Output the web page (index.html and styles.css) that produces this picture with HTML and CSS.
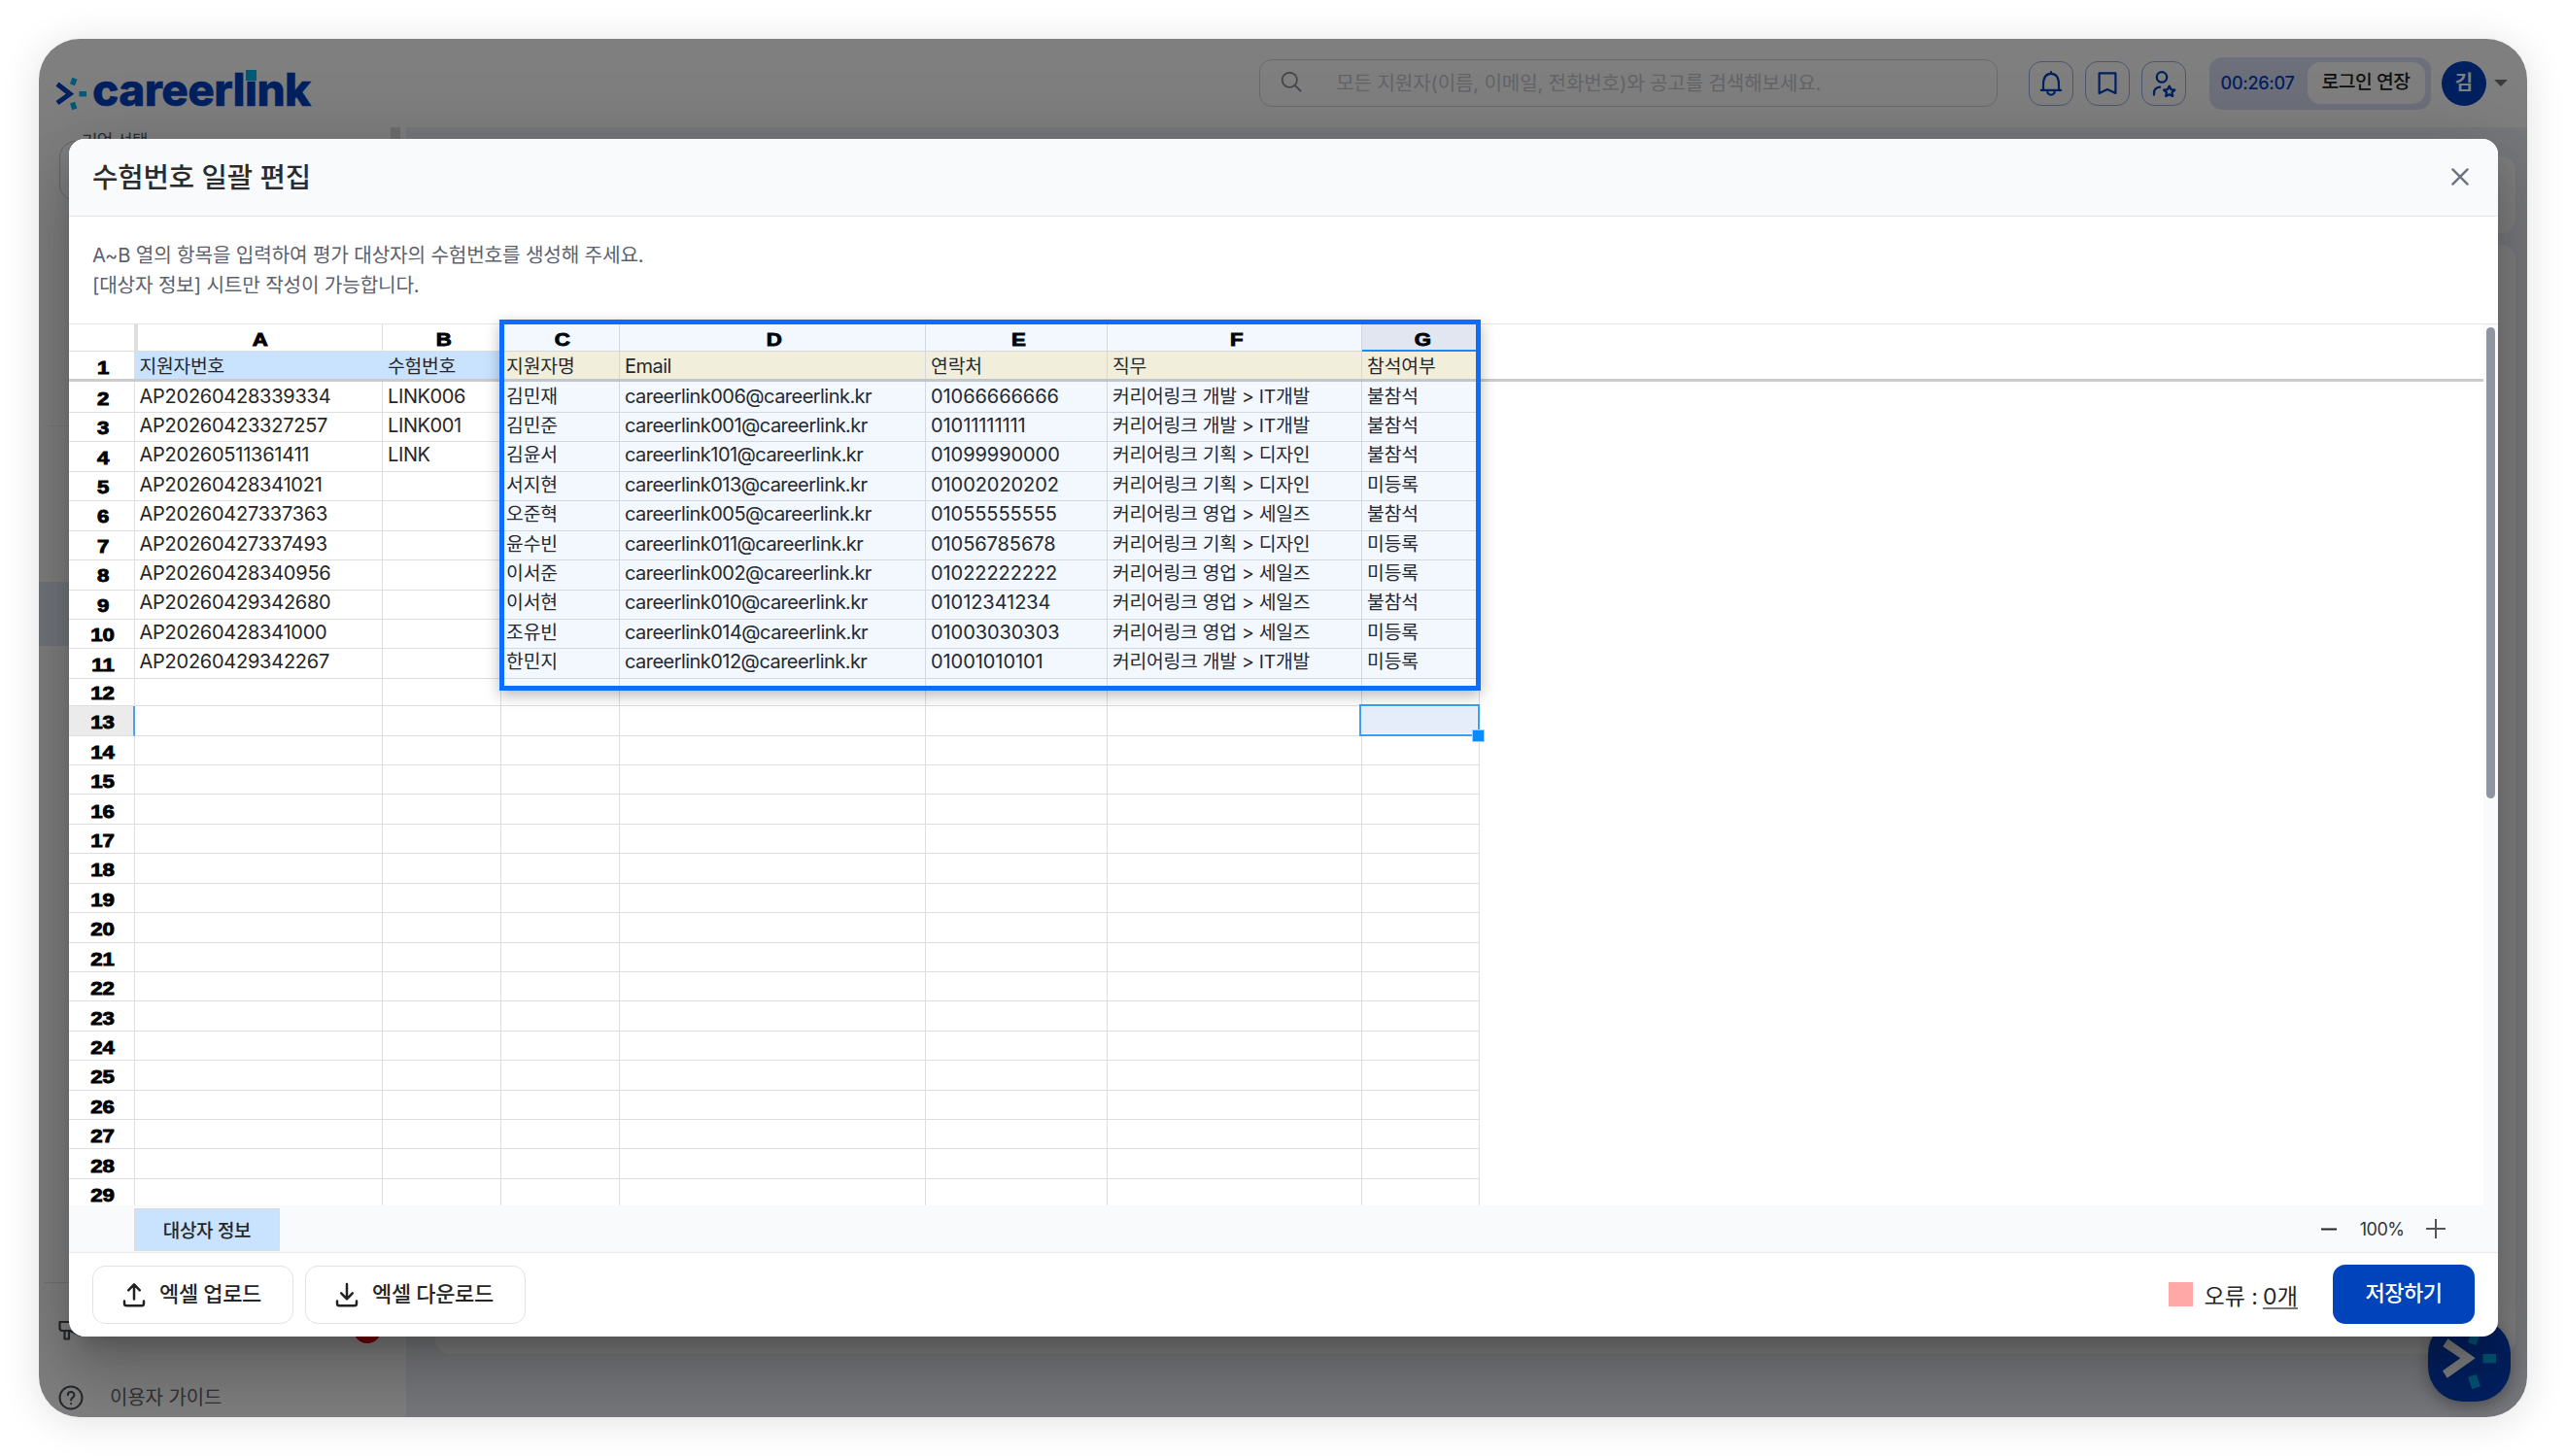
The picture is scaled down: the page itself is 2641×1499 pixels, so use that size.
FILE: index.html
```html
<!DOCTYPE html>
<html lang="ko">
<head>
<meta charset="utf-8">
<title>careerlink</title>
<link rel="stylesheet" href="styles.css">
</head>
<body>
<div class="window">
  <div class="app">
    <header class="topbar">
      <div class="logo">
        <svg class="logo-mark" width="33" height="36" viewBox="0 0 33 36"><path d="M2 8.5 L15 18.7 L2 28" fill="none" stroke="#0040c0" stroke-width="5"/><g fill="#00b4ee"><rect x="16" y="2.5" width="5.4" height="7" transform="rotate(22 18.7 6)"/><rect x="24.5" y="16" width="7.5" height="5.4"/><rect x="16" y="27.5" width="5.4" height="7" transform="rotate(-18 18.7 31)"/></g></svg>
        <span class="logo-text">careerl<span class="logo-i">i</span>nk</span>
      </div>
      <div class="search">
        <svg width="23" height="23" viewBox="0 0 23 23" fill="none" stroke="#8b8f9a" stroke-width="1.9"><circle cx="9.3" cy="9.3" r="7.6"/><path d="M14.8 14.8 L21 21"/></svg>
        <span class="search-hint">모든 지원자(이름, 이메일, 전화번호)와 공고를 검색해보세요.</span>
      </div>
      <div class="tools">
        <div class="tool"><svg width="26" height="28" viewBox="0 0 26 28" fill="none" stroke="#0040c0" stroke-width="2.2" stroke-linejoin="round" stroke-linecap="round"><path d="M13 2.2 V3.6 M2.8 20.8 H23.2 M5 20.6 V15.2 C5 8 8 3.8 13 3.8 C18 3.8 21 8 21 15.2 V20.6 M9.2 21.2 C9.2 27.2 16.8 27.2 16.8 21.2"/></svg></div>
        <div class="tool"><svg width="22" height="26" viewBox="0 0 22 26" fill="none" stroke="#0040c0" stroke-width="2.2" stroke-linejoin="round"><path d="M2.6 2.4 H19.4 V23 L11 19 L2.6 23 Z"/></svg></div>
        <div class="tool"><svg width="26" height="28" viewBox="0 0 26 28" fill="none" stroke="#0040c0" stroke-width="2.3" stroke-linejoin="round" stroke-linecap="round"><circle cx="11" cy="7.4" r="5.2"/><path d="M3 25.6 V23.6 Q3 18.4 9.2 17.6"/><path d="M18.7 16.6 L20.4 20.1 L24.3 20.6 L21.5 23.2 L22.2 27 L18.7 25.2 L15.2 27 L15.9 23.2 L13.1 20.6 L17 20.1 Z"/></svg></div>
      </div>
      <div class="session"><span class="timer">00:26:07</span><span class="extend">로그인 연장</span></div>
      <div class="avatar">김</div>
      <div class="caret"></div>
    </header>
    <div class="below">
      <aside class="sidebar">
        <div class="company"><span class="company-label">기업 선택</span></div>
        <div class="rule rule-top"></div>
        <div class="menu-active"></div>
        <div class="rule rule-bottom"></div>
        <div class="notice">
          <svg width="26" height="26" viewBox="0 0 26 26" fill="none" stroke="#4b5059" stroke-width="2.2" stroke-linejoin="round"><path d="M1.5 4 H12 L23 1 V18 L12 13 H4 Q1.5 13 1.5 10 Z M6.5 13 V21.5 H11 V13"/></svg>
          <span class="badge"></span>
        </div>
        <div class="guide">
          <svg width="26" height="26" viewBox="0 0 26 26" fill="none" stroke="#4b5059" stroke-width="2" stroke-linecap="round"><circle cx="13" cy="13" r="11.5"/><path d="M9.8 10.3 C9.8 5.9 16.4 5.9 16.4 10.2 C16.4 13 13.1 12.8 13.1 15.6 M13.1 19 V19.2"/></svg>
          <span>이용자 가이드</span>
        </div>
      </aside>
      <div class="gutter"></div>
      <main class="content"><div class="card card-top"></div><div class="card card-main"></div></main>
    </div>
    <div class="chat"><svg width="85" height="85" viewBox="0 0 85 85"><path fill="#fff" d="M20.5 20.3 L48.7 40.3 L19.7 60.7 L15 53.3 L33.3 40.3 L15.3 28.2 Z"/><g fill="#00a8e8"><rect x="43" y="13" width="9" height="13" transform="rotate(22 47.5 19.5)"/><rect x="56.5" y="36" width="13.5" height="9.3"/><rect x="43" y="58" width="9" height="13" transform="rotate(-18 47.5 64.5)"/></g></svg></div>
  </div>
  <div class="backdrop">
    <section class="modal">
      <header class="modal-head"><h1>수험번호 일괄 편집</h1>
        <svg width="20" height="20" viewBox="0 0 20 20" fill="none" stroke="#6b7280" stroke-width="2.4" stroke-linecap="round"><path d="M2.4 2.4 L17.6 17.6 M17.6 2.4 L2.4 17.6"/></svg></header>
      <div class="intro">A~B 열의 항목을 입력하여 평가 대상자의 수험번호를 생성해 주세요.<br>[대상자 정보] 시트만 작성이 가능합니다.</div>
      <div class="sheet">
        <div class="grid">
          <div class="row letters"><b></b><b class="first"><span>A</span></b><b><span>B</span></b><b><span>C</span></b><b><span>D</span></b><b><span>E</span></b><b><span>F</span></b><b class="active"><span>G</span></b></div>
          <div class="frozen"><div class="row titles"><b><span>1</span></b><i>지원자번호</i><i>수험번호</i><i>지원자명</i><i>Email</i><i>연락처</i><i>직무</i><i>참석여부</i></div></div>
          <div class="row"><b><span>2</span></b><i>AP20260428339334</i><i>LINK006</i><i>김민재</i><i>careerlink006@careerlink.kr</i><i>01066666666</i><i>커리어링크 개발 &gt; IT개발</i><i>불참석</i></div>
          <div class="row"><b><span>3</span></b><i>AP20260423327257</i><i>LINK001</i><i>김민준</i><i>careerlink001@careerlink.kr</i><i>01011111111</i><i>커리어링크 개발 &gt; IT개발</i><i>불참석</i></div>
          <div class="row"><b><span>4</span></b><i>AP20260511361411</i><i>LINK</i><i>김윤서</i><i>careerlink101@careerlink.kr</i><i>01099990000</i><i>커리어링크 기획 &gt; 디자인</i><i>불참석</i></div>
          <div class="row"><b><span>5</span></b><i>AP20260428341021</i><i></i><i>서지현</i><i>careerlink013@careerlink.kr</i><i>01002020202</i><i>커리어링크 기획 &gt; 디자인</i><i>미등록</i></div>
          <div class="row"><b><span>6</span></b><i>AP20260427337363</i><i></i><i>오준혁</i><i>careerlink005@careerlink.kr</i><i>01055555555</i><i>커리어링크 영업 &gt; 세일즈</i><i>불참석</i></div>
          <div class="row"><b><span>7</span></b><i>AP20260427337493</i><i></i><i>윤수빈</i><i>careerlink011@careerlink.kr</i><i>01056785678</i><i>커리어링크 기획 &gt; 디자인</i><i>미등록</i></div>
          <div class="row"><b><span>8</span></b><i>AP20260428340956</i><i></i><i>이서준</i><i>careerlink002@careerlink.kr</i><i>01022222222</i><i>커리어링크 영업 &gt; 세일즈</i><i>미등록</i></div>
          <div class="row"><b><span>9</span></b><i>AP20260429342680</i><i></i><i>이서현</i><i>careerlink010@careerlink.kr</i><i>01012341234</i><i>커리어링크 영업 &gt; 세일즈</i><i>불참석</i></div>
          <div class="row"><b><span>10</span></b><i>AP20260428341000</i><i></i><i>조유빈</i><i>careerlink014@careerlink.kr</i><i>01003030303</i><i>커리어링크 영업 &gt; 세일즈</i><i>미등록</i></div>
          <div class="row"><b><span>11</span></b><i>AP20260429342267</i><i></i><i>한민지</i><i>careerlink012@careerlink.kr</i><i>01001010101</i><i>커리어링크 개발 &gt; IT개발</i><i>미등록</i></div>
          <div class="row"><b><span>12</span></b><i></i><i></i><i></i><i></i><i></i><i></i><i></i></div>
          <div class="row current"><b><span>13</span></b><i></i><i></i><i></i><i></i><i></i><i></i><i class="selected"></i></div>
          <div class="row"><b><span>14</span></b><i></i><i></i><i></i><i></i><i></i><i></i><i></i></div>
          <div class="row"><b><span>15</span></b><i></i><i></i><i></i><i></i><i></i><i></i><i></i></div>
          <div class="row"><b><span>16</span></b><i></i><i></i><i></i><i></i><i></i><i></i><i></i></div>
          <div class="row"><b><span>17</span></b><i></i><i></i><i></i><i></i><i></i><i></i><i></i></div>
          <div class="row"><b><span>18</span></b><i></i><i></i><i></i><i></i><i></i><i></i><i></i></div>
          <div class="row"><b><span>19</span></b><i></i><i></i><i></i><i></i><i></i><i></i><i></i></div>
          <div class="row"><b><span>20</span></b><i></i><i></i><i></i><i></i><i></i><i></i><i></i></div>
          <div class="row"><b><span>21</span></b><i></i><i></i><i></i><i></i><i></i><i></i><i></i></div>
          <div class="row"><b><span>22</span></b><i></i><i></i><i></i><i></i><i></i><i></i><i></i></div>
          <div class="row"><b><span>23</span></b><i></i><i></i><i></i><i></i><i></i><i></i><i></i></div>
          <div class="row"><b><span>24</span></b><i></i><i></i><i></i><i></i><i></i><i></i><i></i></div>
          <div class="row"><b><span>25</span></b><i></i><i></i><i></i><i></i><i></i><i></i><i></i></div>
          <div class="row"><b><span>26</span></b><i></i><i></i><i></i><i></i><i></i><i></i><i></i></div>
          <div class="row"><b><span>27</span></b><i></i><i></i><i></i><i></i><i></i><i></i><i></i></div>
          <div class="row"><b><span>28</span></b><i></i><i></i><i></i><i></i><i></i><i></i><i></i></div>
          <div class="row"><b><span>29</span></b><i></i><i></i><i></i><i></i><i></i><i></i><i></i></div>
        </div>
        <div class="scroll"><div class="thumb"></div></div>
      </div>
      <div class="callout"></div>
      <div class="tabs">
        <div class="tab">대상자 정보</div>
        <div class="zoom">
          <svg width="16" height="3" viewBox="0 0 16 3"><path d="M0 1.5 H16" stroke="#222" stroke-width="2"/></svg>
          <span>100%</span>
          <svg width="20" height="20" viewBox="0 0 20 20"><path d="M0 10 H20 M10 0 V20" stroke="#555" stroke-width="2"/></svg>
        </div>
      </div>
      <footer class="actions">
        <div class="btn upload"><svg width="24" height="26" viewBox="0 0 24 26" fill="none" stroke="#222" stroke-width="2.5" stroke-linecap="round" stroke-linejoin="round"><path d="M12 17.5 V2.6 M6.2 8.4 L12 2.4 L17.8 8.4 M2 19.5 V22 Q2 24.3 4.3 24.3 H19.7 Q22 24.3 22 22 V19.5"/></svg><span>엑셀 업로드</span></div>
        <div class="btn download"><svg width="24" height="26" viewBox="0 0 24 26" fill="none" stroke="#222" stroke-width="2.5" stroke-linecap="round" stroke-linejoin="round"><path d="M12 2 V17 M6.2 11.3 L12 17.3 L17.8 11.3 M2 19.5 V22 Q2 24.3 4.3 24.3 H19.7 Q22 24.3 22 22 V19.5"/></svg><span>엑셀 다운로드</span></div>
        <div class="errors"><span class="swatch"></span><span class="err-label">오류 :</span><span class="err-count">0개</span></div>
        <div class="save">저장하기</div>
      </footer>
    </section>
  </div>
</div>
</body>
</html>
```
FILE: styles.css
```css
* { box-sizing: border-box; }
body {
  margin: 0;
  padding: 40px;
  width: 2641px;
  height: 1499px;
  overflow: hidden;
  background: #fff;
  font-family: Inter, "Noto Sans CJK KR", sans-serif;
  color: #262626;
}
svg { display: block; flex: none; }
.window {
  position: relative;
  width: 2561px;
  height: 1419px;
  border-radius: 42px;
  box-shadow: 0 4px 40px rgba(0, 0, 0, .12);
}

/* application behind the dialog */
.app {
  position: relative;
  height: 100%;
  border-radius: 42px;
  overflow: hidden;
  background: #fff;
  display: flex;
  flex-direction: column;
}
.topbar { height: 91px; display: flex; align-items: center; padding: 0 20px 0 17px; flex: none; }
.logo { display: flex; align-items: center; width: 1240.5px; padding-top: 20px; }
.logo-mark { margin-right: 5px; }
.logo-text {
  font: 800 46px/1 Inter, sans-serif;
  letter-spacing: -.6px;
  color: #0040c0;
  -webkit-text-stroke: .5px #0040c0;
  margin-top: -7px;
}
.logo-i { position: relative; }
.logo-i::after {
  content: "";
  position: absolute;
  left: 1px;
  top: 8px;
  width: 11px;
  height: 10.5px;
  background: #00b4ee;
}
.search {
  width: 760.5px;
  height: 49px;
  border: 1.5px solid #d2d4da;
  border-radius: 13px;
  display: flex;
  align-items: center;
  padding: 0 0 2px 21px;
}
.search-hint { margin-left: 34px; font-size: 20.1px; letter-spacing: -.15px; color: #c6c9cf; }
.tools { display: flex; gap: 12px; margin-left: 30.5px; }
.tool {
  width: 46px;
  height: 46px;
  border: 1.5px solid #96aee0;
  border-radius: 13px;
  display: flex;
  align-items: center;
  justify-content: center;
}
.session {
  margin-left: 24px;
  width: 228px;
  height: 54px;
  border-radius: 13px;
  background: #dae1f6;
  display: flex;
  align-items: center;
  padding: 0 6px 0 12px;
}
.timer { font-size: 18px; font-weight: 500; letter-spacing: -.27px; color: #0040c0; width: 89px; white-space: nowrap; }
.extend {
  width: 121px;
  height: 43px;
  border-radius: 13px;
  background: #fff;
  font-size: 19.3px;
  font-weight: 500;
  letter-spacing: -.45px;
  line-height: 41px;
  text-align: center;
  color: #222;
}
.avatar {
  margin-left: 11.5px;
  width: 46px;
  height: 46px;
  border-radius: 50%;
  background: #0040c0;
  color: #fff;
  font-size: 20px;
  font-weight: 700;
  line-height: 45px;
  text-align: center;
}
.caret { margin-left: 9px; border: 7px solid transparent; border-top-color: #777; border-bottom: 0; }
.tool, .session, .avatar { position: relative; left: 1px; }
.below { flex: 1; display: flex; }
.sidebar { width: 362px; display: flex; flex-direction: column; }
.company {
  position: relative;
  margin: 14px 0 0 21px;
  width: 320px;
  height: 62px;
  border: 1.5px solid #c8c8cc;
  border-radius: 17px;
}
.company-label {
  position: absolute;
  left: 16px;
  top: -14px;
  padding: 0 6px;
  background: #fff;
  font-size: 18px;
  line-height: 27px;
  letter-spacing: -.7px;
  white-space: nowrap;
  color: #555a63;
}
.rule { margin-left: 6px; height: 1px; background: #f0f0f2; }
.rule-top { margin-top: 231px; }
.menu-active { margin-top: 160px; height: 66px; background: #e4eaf6; }
.rule-bottom { margin-top: 655px; background: #e4e4e6; }
.notice { margin: 36px 0 0 20px; display: flex; justify-content: space-between; padding-right: 10px; width: 342px; }
.badge { width: 28px; height: 28px; border-radius: 50%; background: #e3000f; margin-top: -2px; }
.guide { margin: 41px 0 0 20px; display: flex; align-items: center; font-size: 20px; letter-spacing: -.1px; color: #62666e; }
.guide span { margin-left: 27px; line-height: 30px; }
.gutter { width: 10px; height: 640px; margin-right: 6px; background: #dcdcdc; }
.content { flex: 1; background: #eef0f9; padding: 30px 12px 0 30px; }
.card { background: #fff; border-radius: 15px; }
.card-top { height: 79px; margin-bottom: 12px; }
.card-main { height: 1142px; }
.chat {
  position: absolute;
  right: 17.5px;
  bottom: 16px;
  width: 85px;
  height: 85px;
  border-radius: 36px;
  background: #0040c0;
  box-shadow: 0 5px 16px rgba(0, 0, 0, .3);
}

/* dialog */
.backdrop {
  position: absolute;
  inset: 0;
  border-radius: 42px;
  overflow: hidden;
  background: rgba(0, 0, 0, .5);
  padding: 103px 30px 0 31px;
}
.modal {
  position: relative;
  height: 1232.5px;
  border-radius: 16px;
  overflow: clip;
  background: #fff;
  display: flex;
  flex-direction: column;
  box-shadow: 0 18px 25px -12px rgba(0, 0, 0, .2), 0 40px 64px 5px rgba(0, 0, 0, .14), 0 15px 78px 14px rgba(0, 0, 0, .12);
}
.modal-head {
  height: 79.5px;
  flex: none;
  background: #f8fafc;
  border-bottom: 1.5px solid #e3e5e9;
  display: flex;
  align-items: center;
  justify-content: space-between;
  padding: 0 29px 0 24px;
}
.modal-head h1 { margin: 0; padding-bottom: 3px; font-size: 28.7px; font-weight: 500; letter-spacing: -.15px; color: #2b2b2b; }
.intro { height: 110.5px; flex: none; padding: 25.5px 24px 0; font-size: 20.2px; line-height: 30.5px; letter-spacing: -.17px; color: #5b616d; }
.sheet { height: 908px; flex: none; display: flex; overflow: hidden; }
.grid { flex: 1; border-top: 1px solid #e4e4e4; }
.row {
  display: grid;
  grid-template-columns: 68px 255px 122px 122px 315px 187px 262px 121px;
  height: 30.43px;
}
.row > b, .row > i { border-right: 1.5px solid #dedede; border-bottom: 1.5px solid #dedede; }
.row > i {
  font-style: normal;
  font-size: 20px;
  line-height: 31.5px;
  padding-left: 5px;
  letter-spacing: -.25px;
  white-space: nowrap;
  color: #262626;
}
.row > i:nth-child(2) { padding-left: 4.5px; }
.row > i:nth-child(3) { letter-spacing: -.4px; }
.row > i:nth-child(4) { font-size: 19.3px; letter-spacing: -.1px; }
.row > i:nth-child(5) { letter-spacing: -.54px; }
.row > i:nth-child(6) { letter-spacing: -.07px; }
.row > i:nth-child(7) { font-size: 19.3px; letter-spacing: -.22px; }
.row > i:nth-child(8) { font-size: 19.3px; letter-spacing: -.07px; }
.row > b {
  display: flex;
  align-items: center;
  justify-content: center;
  padding: 4px 0 0 3px;
  font: 700 19px/1 "Liberation Sans", Arial, sans-serif;
  color: #000;
}
.row > b > span { transform: scaleX(1.17); -webkit-text-stroke: .9px #000; }
.letters { height: 28px; }
.letters > b { padding: 4px 0 0 4px; }
.letters > .first { border-left: 4px solid #dedede; margin-left: -1px; padding-left: 0; }
.letters > .active { background: #eceef2; border-bottom: 2px solid #1a8cf5; }
.frozen { height: 30.5px; background: linear-gradient(#cbcbcb, #cbcbcb) 0 100% / 2486px 3px no-repeat; }
.row.titles { height: 28px; }
.titles > i { background: #fef6dc; border-bottom: 0; font-size: 19.3px; line-height: 30.5px; height: 28px; overflow: hidden; }
.titles > i:nth-child(2), .titles > i:nth-child(3) { background: #c9e3ff; letter-spacing: -.24px; }
.titles > i:nth-child(5) { font-size: 20px; }
.titles > b { border-bottom: 0; }
.current > b { background: #ebebeb; border-right: 2px solid #4aa3f0; }
.row > .selected {
  position: relative;
  margin: -2px 0 0 -3px;
  border: 2px solid #3a9ff5;
  background: #e5ecfa;
  box-shadow: inset 0 0 0 1px #f3f7fe;
}
.selected::after {
  content: "";
  position: absolute;
  right: -7px;
  bottom: -8px;
  width: 11px;
  height: 11px;
  background: #0a8aff;
  border: 1px solid #9fd0ff;
}
.scroll { width: 15px; background: #f8fafc; padding: 3px 3px; border-top: 1px solid #e4e4e4; }
.thumb { height: 485px; border-radius: 5px; background: #8f95a3; }
.callout {
  position: absolute;
  left: 443px;
  top: 186px;
  width: 1010px;
  height: 382px;
  border: 5px solid #0d6dff;
  background: rgba(13, 90, 240, .05);
  box-shadow: 0 5px 14px rgba(0, 0, 0, .28);
}
.tabs {
  height: 49px;
  flex: none;
  background: #f9fafc;
  border-bottom: 1.5px solid #e8e8ea;
  display: flex;
  align-items: center;
  justify-content: space-between;
  padding: 0 54px 0 67px;
}
.tab {
  width: 150px;
  height: 44px;
  margin-top: 1px;
  background: #c9e3ff;
  border: 1px solid #dcdcdc;
  text-align: center;
  font-size: 19px;
  font-weight: 500;
  letter-spacing: -.33px;
  line-height: 46px;
}
.zoom { display: flex; align-items: center; font-size: 18px; letter-spacing: -.5px; color: #333; }
.zoom span { margin: 0 22.5px 0 23.5px; }
.actions { flex: 1; display: flex; align-items: center; padding: 0 24px 0; }
.btn {
  height: 60px;
  border: 1.5px solid #e0e2e7;
  border-radius: 13px;
  display: flex;
  align-items: center;
  font-size: 22px;
  font-weight: 500;
  letter-spacing: -.36px;
  line-height: 56px;
}
.btn span { margin-left: 14.5px; padding-bottom: 1px; white-space: nowrap; }
.upload { width: 207px; padding-left: 29.5px; }
.download { width: 227px; padding-left: 29.5px; margin-left: 12px; }
.errors { margin-left: auto; display: flex; align-items: center; font-size: 23px; font-weight: 400; }
.swatch { width: 25px; height: 25px; background: #ffa8a8; margin-right: 12px; }
.err-label { letter-spacing: 0; margin-right: 5px; }
.err-count { text-decoration: underline; text-decoration-thickness: 2px; text-underline-offset: 3px; letter-spacing: .2px; text-decoration-color: #777; }
.save {
  margin-left: 36px;
  width: 146px;
  height: 61px;
  border-radius: 13px;
  background: #0043ba;
  color: #fff;
  font-size: 22px;
  font-weight: 500;
  letter-spacing: -.5px;
  line-height: 58.5px;
  text-align: center;
}
```
